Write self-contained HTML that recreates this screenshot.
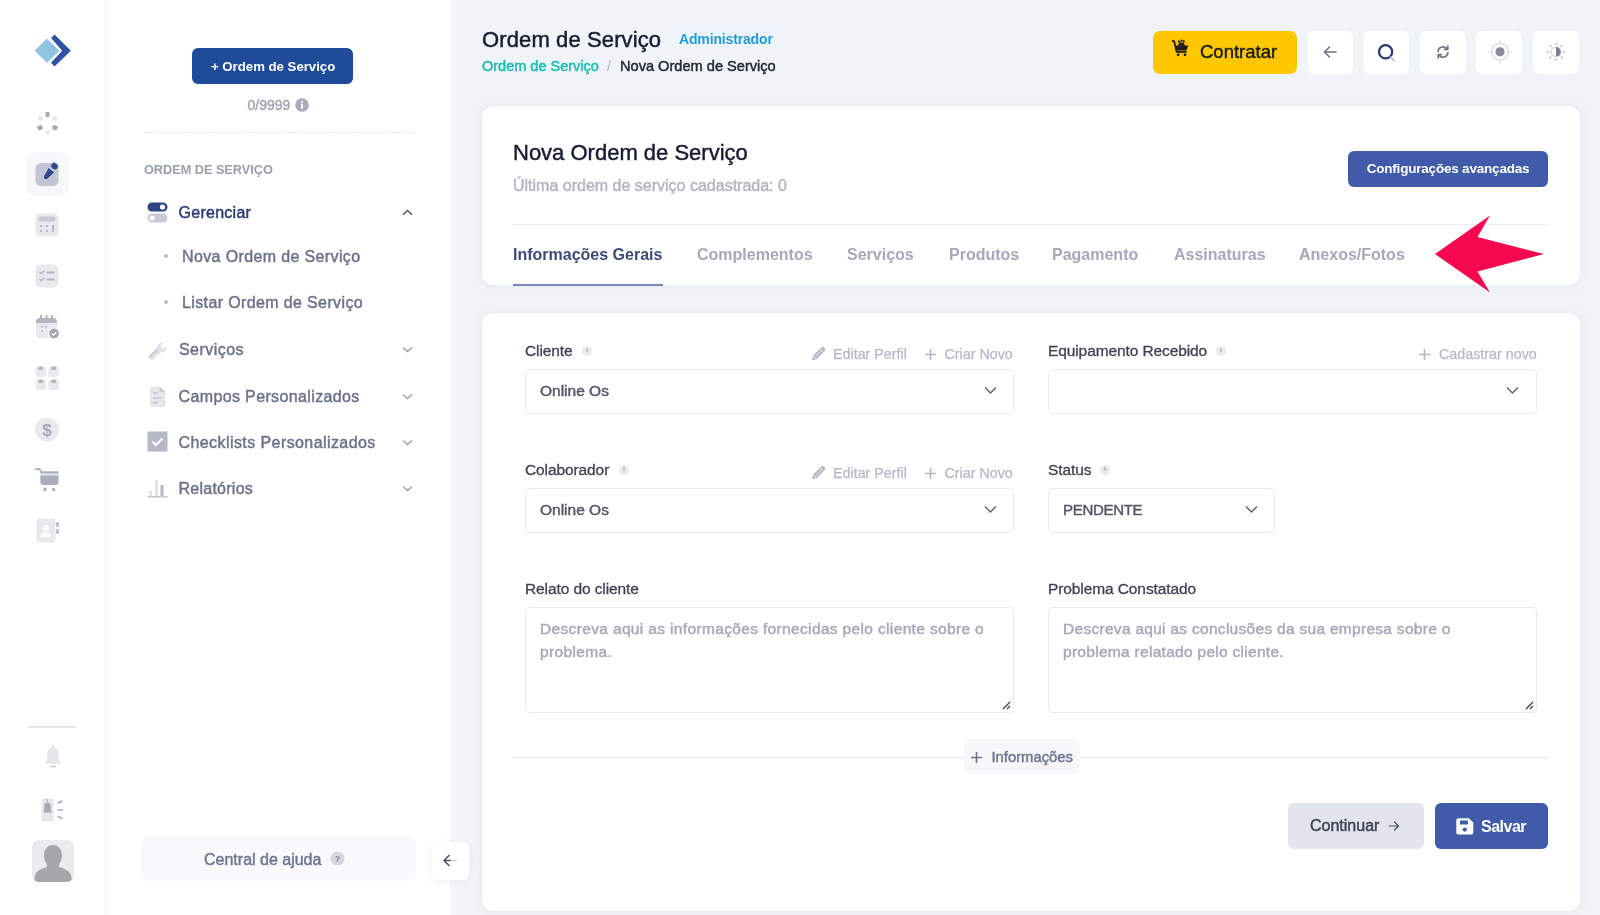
<!DOCTYPE html>
<html><head><meta charset="utf-8">
<style>
*{box-sizing:border-box;margin:0;padding:0}
html,body{will-change:transform;width:1600px;height:915px;overflow:hidden;background:#f0f3f7;font-family:"Liberation Sans",sans-serif}
.a{position:absolute;white-space:nowrap}
.m{-webkit-text-stroke:0.45px currentColor}
#rail{position:absolute;left:0;top:0;width:106px;height:915px;background:#fff;border-right:1px solid #f2f3f5}
#side{position:absolute;left:106px;top:0;width:344px;height:915px;background:#fff}
.card{position:absolute;background:#fff;border-radius:12px;box-shadow:0 0 10px 1px rgba(70,80,120,.06)}
.ibtn{position:absolute;top:31px;width:46px;height:43px;background:#fff;border-radius:7px}
.sel{position:absolute;border:1px solid #e9ebf1;border-radius:5px;background:#fff}
.lbl{position:absolute;font-size:15.5px;letter-spacing:-0.1px;color:#3f4254;white-space:nowrap;-webkit-text-stroke:0.3px currentColor}
.info{position:absolute;width:10px;height:10px;border-radius:50%;background:#e9eaef}
.info:after{content:"";position:absolute;left:4px;top:2px;width:2px;height:4px;background:#c2c5cf}
.act{position:absolute;font-size:14.3px;color:#b5b8c8;white-space:nowrap;-webkit-text-stroke:0.25px currentColor}
.menu{position:absolute;font-size:16px;letter-spacing:0.37px;color:#6c7289;white-space:nowrap;-webkit-text-stroke:0.45px currentColor}
.chev{position:absolute;width:7px;height:7px;border-right:1.5px solid #9aa0b4;border-bottom:1.5px solid #9aa0b4;transform:rotate(45deg)}
.tab{position:absolute;top:246px;font-size:16px;font-weight:700;color:#a4a8b8;white-space:nowrap}
</style></head><body>

<!-- ICON RAIL -->
<div id="rail"></div>

<!-- logo -->
<svg class="a" style="left:25px;top:25px" width="60" height="50" viewBox="0 0 60 50">
  <polygon points="9.6,25.7 21.9,13.7 34.4,25.7 21.9,37.7" fill="#8fc4e2"/>
  <polygon points="29.5,9.6 45.9,25.7 29.5,41.5 26,37.7 37.2,25.7 26,13.1" fill="#3151a3"/>
</svg>
<!-- loader -->
<svg class="a" style="left:34.5px;top:111px" width="25" height="25" viewBox="0 0 25 25">
  <rect x="10.5" y="1" width="4" height="5" rx="1" fill="#a6a9b3"/>
  <rect x="17.5" y="5" width="4.5" height="4.5" rx="1.5" fill="#e6e7eb" transform="rotate(30 19.7 7.2)"/>
  <rect x="17.5" y="14.5" width="5" height="4.5" rx="1" fill="#a6a9b3" transform="rotate(30 20 16.7)"/>
  <rect x="10.5" y="19" width="4.5" height="4.5" rx="2" fill="#e8e9ed"/>
  <rect x="2.5" y="14.5" width="5" height="4.5" rx="1" fill="#a6a9b3" transform="rotate(-30 5 16.7)"/>
  <rect x="3" y="5" width="4.5" height="4.5" rx="1.5" fill="#e6e7eb" transform="rotate(-30 5.2 7.2)"/>
</svg>
<!-- active edit -->
<div class="a" style="left:26px;top:152px;width:43px;height:44px;background:#f7f7f9;border-radius:9px"></div>
<svg class="a" style="left:35px;top:158px" width="26" height="30" viewBox="0 0 26 30">
  <rect x="0.5" y="5" width="23" height="23" rx="5.5" fill="#c2c6d4"/>
  <g transform="translate(9.6,20.8) rotate(-51.8)">
    <path d="M2.2-2.6L11.4-4V4L2.2 2.6A2.6 2.6 0 0 1 2.2-2.6z" fill="#2f4a8f" stroke="#e4e7ef" stroke-width="0.7"/>
    <ellipse cx="16" cy="0" rx="3.6" ry="4.1" fill="#2f4a8f" stroke="#e4e7ef" stroke-width="0.8"/>
  </g>
</svg>
<!-- calculator -->
<svg class="a" style="left:35px;top:213px" width="24" height="24" viewBox="0 0 24 24">
  <rect x="0.5" y="0.5" width="23" height="23" rx="5" fill="#e8e9ef"/>
  <rect x="3.5" y="3.5" width="17" height="5" rx="2" fill="#c6c9d4"/>
  <g fill="#b5b9c6"><rect x="5" y="12" width="2" height="2"/><rect x="11" y="12" width="2" height="2"/><rect x="5" y="17" width="2" height="2"/><rect x="11" y="17" width="2" height="2"/><rect x="17" y="12" width="2" height="7"/></g>
</svg>
<!-- checklist -->
<svg class="a" style="left:35px;top:264px" width="24" height="24" viewBox="0 0 24 24">
  <rect x="0.5" y="0.5" width="23" height="23" rx="5" fill="#e8e9ef"/>
  <path d="M4.5 8l1.7 1.7 3-3M4.5 15l1.7 1.7 3-3" fill="none" stroke="#b0b4c2" stroke-width="1.4"/>
  <path d="M11.5 8.5h8M11.5 15.5h8" stroke="#b0b4c2" stroke-width="1.8"/>
</svg>
<!-- calendar -->
<svg class="a" style="left:35px;top:314px" width="26" height="26" viewBox="0 0 26 26">
  <rect x="1" y="4" width="21" height="20" rx="4" fill="#e8e9ef"/>
  <path d="M1 8a4 4 0 0 1 4-4h13a4 4 0 0 1 4 4v1H1z" fill="#b3b6c2"/>
  <g fill="#b3b6c2"><rect x="5" y="1" width="2" height="4"/><rect x="10.5" y="1" width="2" height="4"/><rect x="16" y="1" width="2" height="4"/><rect x="6" y="12" width="1.6" height="1.6"/><rect x="10" y="12" width="1.6" height="1.6"/><rect x="6" y="16" width="1.6" height="1.6"/></g>
  <circle cx="19" cy="19.5" r="5.5" fill="#a3a7b5" stroke="#fff" stroke-width="1.2"/>
  <path d="M16.8 19.5l1.6 1.6 2.8-2.8" fill="none" stroke="#fff" stroke-width="1.3"/>
</svg>
<!-- grid -->
<svg class="a" style="left:35px;top:365px" width="25" height="26" viewBox="0 0 25 26">
  <g fill="#e8e9ef"><rect x="0.5" y="1.5" width="10.5" height="10.5" rx="2"/><rect x="13.5" y="1.5" width="10.5" height="10.5" rx="2"/><rect x="0.5" y="14.5" width="10.5" height="10.5" rx="2"/><rect x="13.5" y="14.5" width="10.5" height="10.5" rx="2"/></g>
  <g fill="#b3b6c2"><rect x="3.5" y="1.5" width="4.5" height="3.5" rx="0.8"/><rect x="16.5" y="1.5" width="4.5" height="3.5" rx="0.8"/><rect x="3.5" y="14.5" width="4.5" height="3.5" rx="0.8"/><rect x="16.5" y="14.5" width="4.5" height="3.5" rx="0.8"/></g>
</svg>
<!-- dollar -->
<svg class="a" style="left:35px;top:417px" width="24" height="25" viewBox="0 0 24 25">
  <circle cx="12" cy="12.5" r="12" fill="#e8e9ef"/>
  <text x="12" y="19" text-anchor="middle" font-family="Liberation Sans" font-size="17" font-weight="700" fill="#a5a9b6">$</text>
</svg>
<!-- cart -->
<svg class="a" style="left:35px;top:467px" width="25" height="25" viewBox="0 0 25 25">
  <path d="M1 2.2h3.6l1.2 2.2" fill="none" stroke="#a9adba" stroke-width="1.7" stroke-linecap="round"/>
  <path d="M5.3 4.3h18.3v2.3H5.3z" fill="#a9adba"/>
  <path d="M5.3 6.6h18.3v1.8H5.3z" fill="#dcdee6"/>
  <path d="M5.3 8.4h18.3v6.6a3 3 0 0 1-3 3H8.3a3 3 0 0 1-3-3z" fill="#a9adba"/>
  <circle cx="10" cy="22.5" r="1.7" fill="#a9adba"/><circle cx="18.6" cy="22.5" r="1.7" fill="#a9adba"/>
</svg>
<!-- contact -->
<svg class="a" style="left:36px;top:518px" width="24" height="25" viewBox="0 0 24 25">
  <rect x="0.5" y="0.5" width="19" height="24" rx="3" fill="#e8e9ef"/>
  <rect x="20" y="4" width="3" height="5" rx="1" fill="#b9bcc8"/><rect x="20" y="11" width="3" height="5" rx="1" fill="#b9bcc8"/>
  <circle cx="10" cy="10" r="3" fill="#fff"/><path d="M4.5 19a5.5 4.5 0 0 1 11 0z" fill="#fff"/>
</svg>
<!-- bottom rail -->
<div class="a" style="left:28px;top:726px;width:48px;height:2px;background:#e6e8ec"></div>
<svg class="a" style="left:43px;top:745px" width="20" height="24" viewBox="0 0 20 24">
  <rect x="9" y="0" width="2" height="3" fill="#d6d8de"/>
  <path d="M10 2.5c-4 0-5.8 3.2-5.8 7v5.5L1.5 19h17l-2.7-4V9.5c0-3.8-1.8-7-5.8-7z" fill="#e6e7eb"/>
  <path d="M7.5 21.5h5" stroke="#c8cad2" stroke-width="1.5" stroke-linecap="round"/>
</svg>
<svg class="a" style="left:41px;top:798px" width="24" height="24" viewBox="0 0 24 24">
  <rect x="0.5" y="0.5" width="12" height="23" rx="2" fill="#e6e7ec"/>
  <path d="M6.5 4.5c-2.2 0-3.3 1.7-3.3 3.8v4L2 14.5h9l-1.2-2.2v-4c0-2.1-1.1-3.8-3.3-3.8z" fill="#a6a9b6"/>
  <rect x="6" y="1" width="1" height="3" fill="#a6a9b6"/>
  <path d="M17 5l4-2M17 12h4.5M17 18.5l4 2" stroke="#a6a9b6" stroke-width="1.6" stroke-linecap="round"/>
</svg>
<div class="a" style="left:32px;top:840px;width:42px;height:42px;background:#ebebed;border-radius:7px;overflow:hidden">
  <svg width="42" height="42" viewBox="0 0 42 42"><path d="M21 5c-5.5 0-9 4.3-9 10.5 0 3.2 1 6 2.6 8l.4 3.5c-6.5 1.6-11.5 4.5-12.5 10V43h37v-6c-1-5.5-6-8.4-12.5-10l.4-3.5c1.6-2 2.6-4.8 2.6-8C30 9.3 26.5 5 21 5z" fill="#a5a7ab"/></svg>
</div>

<!-- SIDEBAR -->
<div id="side"></div>
<div class="a" style="left:450px;top:0;width:24px;height:915px;background:linear-gradient(90deg,#f5f7fa,rgba(240,243,247,0))"></div>
<div class="a" style="left:192px;top:48px;width:161px;height:36px;background:#1f4b9a;border-radius:6px"></div>
<div class="a" style="left:211px;top:59px;font-size:13.2px;font-weight:700;color:#fff">+ Ordem de Serviço</div>
<div class="a m" style="left:247.5px;top:97px;font-size:14px;color:#a2a6b4">0/9999</div>
<svg class="a" style="left:295px;top:97.5px" width="14" height="14" viewBox="0 0 14 14"><circle cx="7" cy="7" r="6.8" fill="#a9adba"/><rect x="6.1" y="5.8" width="1.8" height="5" fill="#fff"/><circle cx="7" cy="3.8" r="1" fill="#fff"/></svg>
<div class="a" style="left:144px;top:132px;width:271px;border-top:1px dashed #e3e5ea"></div>
<div class="a" style="left:144px;top:163px;font-size:12.7px;font-weight:700;color:#9a9fae">ORDEM DE SERVIÇO</div>
<svg class="a" style="left:147px;top:202px" width="21" height="21" viewBox="0 0 21 21">
  <rect x="0.5" y="0.5" width="20" height="9" rx="4.5" fill="#2e4585"/><circle cx="15.5" cy="5" r="2.6" fill="#fff"/>
  <rect x="0.5" y="11.5" width="20" height="9" rx="4.5" fill="#c6c9d8"/><circle cx="5" cy="16" r="2.6" fill="#fff"/>
</svg>
<div class="menu" style="left:178.5px;top:204px;letter-spacing:0.27px;color:#2b3d6f">Gerenciar</div>
<svg class="a" style="left:402px;top:208.5px" width="11" height="8" viewBox="0 0 11 8"><path d="M1 5.8l4.5-4.3 4.5 4.3" fill="none" stroke="#4f5569" stroke-width="1.5"/></svg>
<div class="a" style="left:164px;top:254px;width:4px;height:4px;border-radius:50%;background:#b9bdc9"></div>
<div class="menu" style="left:182px;top:248px">Nova Ordem de Serviço</div>
<div class="a" style="left:164px;top:300px;width:4px;height:4px;border-radius:50%;background:#b9bdc9"></div>
<div class="menu" style="left:182px;top:293.5px">Listar Ordem de Serviço</div>
<svg class="a" style="left:147px;top:339px" width="21" height="21" viewBox="0 0 21 21"><path d="M2 18.5l8.2-8.2a5 5 0 0 1 6.3-6.3l-3 3 .8 2.2 2.2.8 3-3a5 5 0 0 1-6.3 6.3l-8.2 8.2z" fill="#dfe1e7"/><path d="M2 18.5l8.2-8.2" stroke="#c9ccd6" stroke-width="2.2"/></svg>
<div class="menu" style="left:179px;top:341px;letter-spacing:0.45px">Serviços</div>
<svg class="a" style="left:402px;top:346px" width="11" height="7" viewBox="0 0 11 7"><path d="M1 1.5l4.5 4 4.5-4" fill="none" stroke="#9a9fb0" stroke-width="1.4"/></svg>
<svg class="a" style="left:149px;top:386px" width="17" height="22" viewBox="0 0 17 22"><path d="M1 2a1.5 1.5 0 0 1 1.5-1.5h8L16.5 6v13.5a1.5 1.5 0 0 1-1.5 1.5H2.5A1.5 1.5 0 0 1 1 19.5z" fill="#e6e7ec"/><path d="M10.5.5V6h6" fill="#c9ccd5"/><g stroke="#c3c6cf" stroke-width="1.6"><path d="M4 7h5M4 12h8.5M4 16.8h5"/></g></svg>
<div class="menu" style="left:178.5px;top:388px">Campos Personalizados</div>
<svg class="a" style="left:402px;top:392.5px" width="11" height="7" viewBox="0 0 11 7"><path d="M1 1.5l4.5 4 4.5-4" fill="none" stroke="#9a9fb0" stroke-width="1.4"/></svg>
<svg class="a" style="left:147px;top:431px" width="21" height="21" viewBox="0 0 21 21"><rect x="0.5" y="0.5" width="20" height="20" fill="#b4b8c9"/><path d="M5.5 10.5l3.5 3.5 6.5-6.5" fill="none" stroke="#fff" stroke-width="2"/></svg>
<div class="menu" style="left:178.5px;top:434px;letter-spacing:0.42px">Checklists Personalizados</div>
<svg class="a" style="left:402px;top:439px" width="11" height="7" viewBox="0 0 11 7"><path d="M1 1.5l4.5 4 4.5-4" fill="none" stroke="#9a9fb0" stroke-width="1.4"/></svg>
<svg class="a" style="left:147px;top:477px" width="21" height="21" viewBox="0 0 21 21"><rect x="2" y="14" width="3" height="5" fill="#e1e3e9"/><rect x="8" y="3" width="3" height="16" fill="#e1e3e9"/><rect x="13.5" y="8" width="3" height="11" fill="#b6b9c5"/><rect x="0.5" y="19" width="20" height="1.5" fill="#c3c6cf"/></svg>
<div class="menu" style="left:178.5px;top:479.5px;letter-spacing:0.25px">Relatórios</div>
<svg class="a" style="left:402px;top:485px" width="11" height="7" viewBox="0 0 11 7"><path d="M1 1.5l4.5 4 4.5-4" fill="none" stroke="#9a9fb0" stroke-width="1.4"/></svg>
<div class="a" style="left:141px;top:836px;width:275px;height:45px;background:#f9f9fb;border-radius:8px"></div>
<div class="menu" style="left:204px;top:850.5px;font-size:16px;letter-spacing:0;color:#6f7790">Central de ajuda</div>
<svg class="a" style="left:330px;top:851px" width="15" height="15" viewBox="0 0 15 15"><circle cx="7.5" cy="7.5" r="7" fill="#d5d7df"/><text x="7.5" y="11" text-anchor="middle" font-family="Liberation Sans" font-size="9" font-weight="700" fill="#7d8196">?</text></svg>
<div class="a" style="left:432px;top:842px;width:37px;height:38px;background:#fff;border-radius:6px;box-shadow:0 2px 8px rgba(50,60,90,.08)"></div>
<svg class="a" style="left:441px;top:852px" width="17" height="17" viewBox="0 0 17 17"><path d="M15 8.5H9" fill="none" stroke="#c3c7d2" stroke-width="1.6" stroke-linecap="round"/><path d="M9 8.5H3M8 3.5l-5 5 5 5" fill="none" stroke="#4a5268" stroke-width="1.6" stroke-linecap="round" stroke-linejoin="round"/></svg>

<!-- HEADER -->
<div class="a m" style="left:482px;top:26.5px;font-size:22px;letter-spacing:0.12px;color:#181c32">Ordem de Serviço</div>
<div class="a" style="left:673px;top:25px;width:108px;height:24px;background:#eef4f9;border-radius:5px"></div>
<div class="a" style="left:679px;top:31px;font-size:14px;font-weight:700;color:#229cd9;letter-spacing:-0.15px">Administrador</div>
<div class="a m" style="left:482px;top:57.5px;font-size:14.5px;color:#1dbfb4;-webkit-text-stroke:0.5px currentColor">Ordem de Serviço</div>
<div class="a" style="left:607px;top:57.5px;font-size:14.5px;color:#b5b8c5">/</div>
<div class="a m" style="left:620px;top:57.5px;font-size:14.6px;color:#222736">Nova Ordem de Serviço</div>

<!-- CARD 1 -->
<div class="card" style="left:482px;top:106px;width:1098px;height:179px"></div>
<div class="a m" style="left:513px;top:140px;font-size:22px;color:#181c32">Nova Ordem de Serviço</div>
<div class="a m" style="left:513px;top:177px;font-size:16px;color:#b3b6c2">Última ordem de serviço cadastrada: 0</div>
<div class="a" style="left:1348px;top:151px;width:200px;height:36px;background:#3f5ba9;border-radius:6px;color:#fff;font-size:13.5px;letter-spacing:-0.2px;font-weight:700;text-align:center;line-height:36px">Configurações avançadas</div>
<div class="a" style="left:513px;top:224px;width:1035px;height:1px;background:#eceef3"></div>
<div class="tab" style="left:513px;color:#3d4a7a">Informações Gerais</div>
<div class="a" style="left:513px;top:284px;width:150px;height:2px;background:#7d86b8"></div>
<div class="tab" style="left:697px">Complementos</div>
<div class="tab" style="left:847px">Serviços</div>
<div class="tab" style="left:949px">Produtos</div>
<div class="tab" style="left:1052px">Pagamento</div>
<div class="tab" style="left:1174px">Assinaturas</div>
<div class="tab" style="left:1299px">Anexos/Fotos</div>
<svg class="a" style="left:0;top:0" width="1600" height="915"><polygon points="1435,254 1490,215.5 1477.5,237 1544,254 1477.5,271.5 1490,292.5" fill="#f5084d"/></svg>

<!-- TOP RIGHT BUTTONS -->
<div class="a" style="left:1153px;top:31px;width:144px;height:43px;background:#ffc700;border-radius:7px"></div>
<svg class="a" style="left:1170px;top:38px" width="20" height="20" viewBox="0 0 20 20">
  <path d="M2 3.2h2.2l2.4 10.6h10" fill="none" stroke="#1b1b1b" stroke-width="1.7" stroke-linejoin="round"/>
  <polygon points="5.2,7.6 18.2,7.6 16.6,12.6 6.4,12.6" fill="#1b1b1b"/>
  <path d="M8.2 7.8a3.3 3.3 0 0 1 6.6 0z" fill="#1b1b1b"/>
  <g fill="#1b1b1b"><rect x="8" y="2.6" width="2" height="2" transform="rotate(20 9 3.6)"/><rect x="12.6" y="2.4" width="2" height="2" transform="rotate(-20 13.6 3.4)"/><rect x="10.5" y="1.6" width="2" height="2"/></g>
  <circle cx="8.2" cy="16.8" r="1.4" fill="#1b1b1b"/><circle cx="15" cy="16.8" r="1.4" fill="#1b1b1b"/>
</svg>
<div class="a m" style="left:1200px;top:41px;font-size:18.5px;color:#1b1b1b">Contratar</div>
<div class="ibtn" style="left:1307px"></div>
<div class="ibtn" style="left:1363px"></div>
<div class="ibtn" style="left:1420px"></div>
<div class="ibtn" style="left:1476px"></div>
<div class="ibtn" style="left:1533px"></div>
<svg class="a" style="left:1322px;top:44px" width="16" height="16" viewBox="0 0 16 16"><path d="M14 8H2.5M7.5 3L2.5 8l5 5" fill="none" stroke="#6e7488" stroke-width="1.6" stroke-linecap="round" stroke-linejoin="round"/></svg>
<svg class="a" style="left:1374px;top:40px" width="24" height="24" viewBox="0 0 24 24"><circle cx="11.6" cy="11.8" r="6.6" fill="none" stroke="#283a73" stroke-width="2.2"/><path d="M16.6 17l3.4 3.6" stroke="#b6bccb" stroke-width="1.8" stroke-linecap="round"/></svg>
<svg class="a" style="left:1434px;top:43px" width="18" height="18" viewBox="0 0 18 18"><g transform="translate(9 9) scale(0.85) translate(-9 -9)"><path d="M3.2 8.2A5.8 5.8 0 0 1 13.6 5.2M14.8 9.8A5.8 5.8 0 0 1 4.4 12.8" fill="none" stroke="#6e7488" stroke-width="2" stroke-linecap="round"/><path d="M14.6 2.2v3.8h-3.8M3.4 15.8V12h3.8" fill="none" stroke="#6e7488" stroke-width="2" stroke-linecap="round" stroke-linejoin="round"/></g></svg>
<svg class="a" style="left:1486.5px;top:39px" width="26" height="26" viewBox="0 0 26 26"><circle cx="13" cy="12.8" r="8.3" fill="none" stroke="#e0e2e8" stroke-width="1.8"/><path d="M13 1.2v3.5M13 20.9v3.5M1.2 12.8h3.5M21.3 12.8h3.5" stroke="#e0e2e8" stroke-width="1.6"/><circle cx="13" cy="12.8" r="4.6" fill="#858a9e"/></svg>
<svg class="a" style="left:1543.5px;top:40px" width="24" height="24" viewBox="0 0 24 24"><circle cx="12" cy="11.8" r="4.8" fill="none" stroke="#dcdfe6" stroke-width="1.6"/><path d="M12 7a4.8 4.8 0 0 1 0 9.6z" fill="#7a8094"/><g stroke="#a4a8b8" stroke-width="1.6" stroke-linecap="round"><path d="M12 3.6v.4M12 19.6v.4M3.8 11.8h.4M19.8 11.8h.4M6.2 6l.3.3M17.5 17.3l.3.3M6.2 17.6l.3-.3M17.5 6.3l.3-.3"/></g></svg>

<!-- CARD 2 -->
<div class="card" style="left:482px;top:313px;width:1098px;height:598px"></div>
<!-- Cliente -->
<div class="lbl" style="left:525px;top:341.5px">Cliente</div>
<div class="info" style="left:582px;top:345.5px"></div>
<svg class="a" style="left:809.5px;top:345px" width="17" height="17" viewBox="0 0 17 17"><g transform="translate(2 15.2) rotate(-45)"><path d="M0 0L3.5-2.4H15.2a2.4 2.4 0 0 1 0 4.8H3.5z" fill="#b3b7c6"/><path d="M4 0H15" stroke="#e4e6ed" stroke-width="0.9"/><path d="M3.5-2.4V2.4M13.5-2.4V2.4" stroke="#fff" stroke-width="0.7"/></g></svg>
<div class="act" style="left:833px;top:345.7px">Editar Perfil</div>
<svg class="a" style="left:924px;top:348px" width="13" height="13" viewBox="0 0 13 13"><path d="M6.5 1v11M1 6.5h11" stroke="#b3b7c6" stroke-width="1.6"/></svg>
<div class="act" style="left:944.5px;top:345.7px">Criar Novo</div>
<div class="sel" style="left:525px;top:368.5px;width:489px;height:45px"></div>
<div class="a m" style="left:540px;top:381.5px;font-size:15.5px;color:#535869">Online Os</div>
<svg class="a" style="left:984px;top:386px" width="13" height="9" viewBox="0 0 13 9"><path d="M1 1.5l5.5 5.5 5.5-5.5" fill="none" stroke="#60667a" stroke-width="1.5"/></svg>
<!-- Colaborador -->
<div class="lbl" style="left:525px;top:461px">Colaborador</div>
<div class="info" style="left:619px;top:464.5px"></div>
<svg class="a" style="left:809.5px;top:464px" width="17" height="17" viewBox="0 0 17 17"><g transform="translate(2 15.2) rotate(-45)"><path d="M0 0L3.5-2.4H15.2a2.4 2.4 0 0 1 0 4.8H3.5z" fill="#b3b7c6"/><path d="M4 0H15" stroke="#e4e6ed" stroke-width="0.9"/><path d="M3.5-2.4V2.4M13.5-2.4V2.4" stroke="#fff" stroke-width="0.7"/></g></svg>
<div class="act" style="left:833px;top:464.7px">Editar Perfil</div>
<svg class="a" style="left:924px;top:467px" width="13" height="13" viewBox="0 0 13 13"><path d="M6.5 1v11M1 6.5h11" stroke="#b3b7c6" stroke-width="1.6"/></svg>
<div class="act" style="left:944.5px;top:464.7px">Criar Novo</div>
<div class="sel" style="left:525px;top:487.5px;width:489px;height:45px"></div>
<div class="a m" style="left:540px;top:500.5px;font-size:15.5px;color:#535869">Online Os</div>
<svg class="a" style="left:984px;top:505px" width="13" height="9" viewBox="0 0 13 9"><path d="M1 1.5l5.5 5.5 5.5-5.5" fill="none" stroke="#60667a" stroke-width="1.5"/></svg>
<!-- Equipamento -->
<div class="lbl" style="left:1048px;top:341.5px">Equipamento Recebido</div>
<div class="info" style="left:1216px;top:345.5px"></div>
<svg class="a" style="left:1417.5px;top:348px" width="13" height="13" viewBox="0 0 13 13"><path d="M6.5 1v11M1 6.5h11" stroke="#b3b7c6" stroke-width="1.6"/></svg>
<div class="act" style="left:1439px;top:345.7px">Cadastrar novo</div>
<div class="sel" style="left:1047.5px;top:368.5px;width:489px;height:45px"></div>
<svg class="a" style="left:1506px;top:386px" width="13" height="9" viewBox="0 0 13 9"><path d="M1 1.5l5.5 5.5 5.5-5.5" fill="none" stroke="#60667a" stroke-width="1.5"/></svg>
<!-- Status -->
<div class="lbl" style="left:1048px;top:461px">Status</div>
<div class="info" style="left:1100px;top:464.5px"></div>
<div class="sel" style="left:1047.5px;top:487.5px;width:227px;height:45px"></div>
<div class="a m" style="left:1063px;top:501px;font-size:15px;letter-spacing:-0.3px;color:#535869">PENDENTE</div>
<svg class="a" style="left:1245px;top:505px" width="13" height="9" viewBox="0 0 13 9"><path d="M1 1.5l5.5 5.5 5.5-5.5" fill="none" stroke="#60667a" stroke-width="1.5"/></svg>
<!-- Relato -->
<div class="lbl" style="left:525px;top:579.5px">Relato do cliente</div>
<div class="sel" style="left:525px;top:606.5px;width:489px;height:106px"></div>
<div class="a m" style="left:540px;top:616.5px;font-size:15.5px;letter-spacing:0.35px;line-height:23px;color:#a5a9b8;white-space:normal;width:470px">Descreva aqui as informações fornecidas pelo cliente sobre o<br>problema.</div>
<svg class="a" style="left:1002px;top:701px" width="9" height="9" viewBox="0 0 9 9"><path d="M8 1L1 8M8 5L5 8" stroke="#3a3a3a" stroke-width="1.2"/></svg>
<!-- Problema -->
<div class="lbl" style="left:1048px;top:579.5px">Problema Constatado</div>
<div class="sel" style="left:1047.5px;top:606.5px;width:489px;height:106px"></div>
<div class="a m" style="left:1063px;top:616.5px;font-size:15.5px;letter-spacing:0.29px;line-height:23px;color:#a5a9b8;white-space:normal;width:470px">Descreva aqui as conclusões da sua empresa sobre o<br>problema relatado pelo cliente.</div>
<svg class="a" style="left:1525px;top:701px" width="9" height="9" viewBox="0 0 9 9"><path d="M8 1L1 8M8 5L5 8" stroke="#3a3a3a" stroke-width="1.2"/></svg>
<!-- Informacoes divider -->
<div class="a" style="left:513px;top:757px;width:1035px;height:1px;background:#e3e6ec"></div>
<div class="a" style="left:964px;top:739px;width:116px;height:35px;background:#f6f7f9;border-radius:7px"></div>
<svg class="a" style="left:970px;top:751px" width="13" height="13" viewBox="0 0 13 13"><path d="M6.5 1v11M1 6.5h11" stroke="#6e7490" stroke-width="1.6"/></svg>
<div class="a m" style="left:991.5px;top:748.5px;font-size:14.8px;color:#6e7490">Informações</div>
<!-- Buttons -->
<div class="a" style="left:1288px;top:803px;width:136px;height:46px;background:#e2e5ee;border-radius:6px"></div>
<div class="a m" style="left:1310px;top:817px;font-size:16px;color:#3f4254">Continuar</div>
<svg class="a" style="left:1387px;top:819px" width="13" height="13" viewBox="0 0 13 13"><path d="M2 7h9.5M7.5 3l4 4-4 4" fill="none" stroke="#4a5066" stroke-width="1.2" stroke-linecap="round" stroke-linejoin="round"/></svg>
<div class="a" style="left:1435px;top:803px;width:113px;height:46px;background:#3f5ba9;border-radius:6px"></div>
<svg class="a" style="left:1455.5px;top:817.5px" width="18" height="17" viewBox="0 0 18 17"><path d="M0.3 2.3A2 2 0 0 1 2.3 0.3h10.5L17.3 4.6v10A2 2 0 0 1 15.3 16.6H2.3A2 2 0 0 1 0.3 14.6z" fill="#fff"/><rect x="4" y="2.6" width="8" height="4" rx="0.6" fill="#3f5ba9"/><circle cx="8.8" cy="11.6" r="2.1" fill="#3f5ba9"/></svg>
<div class="a" style="left:1481px;top:817.5px;font-size:16px;letter-spacing:-0.5px;font-weight:700;color:#fff">Salvar</div>

</body></html>
